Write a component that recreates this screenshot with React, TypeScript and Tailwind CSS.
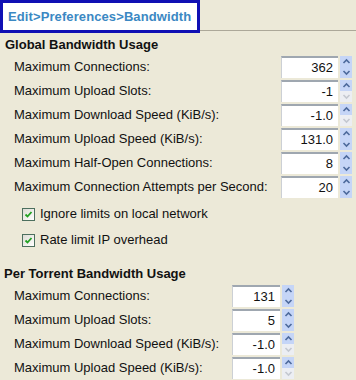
import React from 'react';

type Row = { label: string; value: string; up: boolean; down: boolean };

const globalRows: Row[] = [
  { label: 'Maximum Connections:', value: '362', up: true, down: true },
  { label: 'Maximum Upload Slots:', value: '-1', up: true, down: false },
  { label: 'Maximum Download Speed (KiB/s):', value: '-1.0', up: true, down: false },
  { label: 'Maximum Upload Speed (KiB/s):', value: '131.0', up: true, down: true },
  { label: 'Maximum Half-Open Connections:', value: '8', up: true, down: true },
  { label: 'Maximum Connection Attempts per Second:', value: '20', up: true, down: true },
];

const torrentRows: Row[] = [
  { label: 'Maximum Connections:', value: '131', up: true, down: true },
  { label: 'Maximum Upload Slots:', value: '5', up: true, down: true },
  { label: 'Maximum Download Speed (KiB/s):', value: '-1.0', up: true, down: false },
  { label: 'Maximum Upload Speed (KiB/s):', value: '-1.0', up: true, down: false },
];

function SpinHalf({ dir, enabled }: { dir: 'up' | 'down'; enabled: boolean }) {
  return (
    <div
      className={`w-[12px] h-[11px] flex items-center justify-center ${
        enabled ? 'bg-[#c5d5f7]' : 'bg-[#eceef3]'
      }`}
    >
      <svg width="9" height="7" viewBox="0 0 9 7">
        <polyline
          points={dir === 'up' ? '1.5,5 4.5,2 7.5,5' : '1.5,2 4.5,5 7.5,2'}
          fill="none"
          stroke={enabled ? '#4d6a9c' : '#c4c8d0'}
          strokeWidth="1.6"
        />
      </svg>
    </div>
  );
}

function SpinBox({ row, width }: { row: Row; width: string }) {
  return (
    <div className="flex items-center gap-[2px]">
      <div
        className={`${width} h-[22px] bg-white border-t-2 border-t-[#9fa7b0] border-l border-l-[#ccd0d5] flex items-center justify-end pr-[5px]`}
      >
        {row.value}
      </div>
      <div className="flex flex-col">
        <SpinHalf dir="up" enabled={row.up} />
        <SpinHalf dir="down" enabled={row.down} />
      </div>
    </div>
  );
}

function Check({ label }: { label: string }) {
  return (
    <div className="h-[26px] flex items-center pl-[22px] gap-[5px]">
      <div className="w-[13px] h-[13px] border border-[#4c6f5e] bg-gradient-to-br from-[#dcdcd4] to-white flex items-center justify-center">
        <svg width="9" height="9" viewBox="0 0 9 9">
          <polyline points="1.5,4.5 3.5,6.5 7.5,2" fill="none" stroke="#21a121" strokeWidth="1.8" />
        </svg>
      </div>
      <span>{label}</span>
    </div>
  );
}

export default function App() {
  return (
    <div className="w-[356px] h-[380px] bg-[#ece9d8] text-[13px] text-[#111] overflow-hidden font-['Liberation_Sans',Arial,sans-serif]">
      {/* Breadcrumb header */}
      <div className="flex">
        <div className="w-[200px] h-[33px] border-[3px] border-[#1010b4] bg-white flex items-center pl-[5px]">
          <span className="font-bold text-[#3b88c3] tracking-[0.1px]">Edit&gt;Preferences&gt;Bandwidth</span>
        </div>
        <div className="flex-1 h-[31px] border-b border-[#aca899]" />
      </div>

      {/* Global */}
      <div className="pl-[5px] h-[20px] mt-[2px] flex items-center font-bold">Global Bandwidth Usage</div>
      <div className="flex flex-col pl-[14px]">
        {globalRows.map((r) => (
          <div key={r.label} className="h-[24px] flex items-center justify-between pr-[4px]">
            <span>{r.label}</span>
            <SpinBox row={r} width="w-[57px]" />
          </div>
        ))}
      </div>
      <div className="mt-[2px]">
        <Check label="Ignore limits on local network" />
        <Check label="Rate limit IP overhead" />
      </div>

      {/* Per torrent */}
      <div className="pl-[4px] h-[20px] mt-[11px] flex items-center font-bold">Per Torrent Bandwidth Usage</div>
      <div className="flex flex-col pl-[14px]">
        {torrentRows.map((r) => (
          <div key={r.label} className="h-[24px] flex items-center">
            <span className="w-[218px]">{r.label}</span>
            <SpinBox row={r} width="w-[48px]" />
          </div>
        ))}
      </div>
    </div>
  );
}
